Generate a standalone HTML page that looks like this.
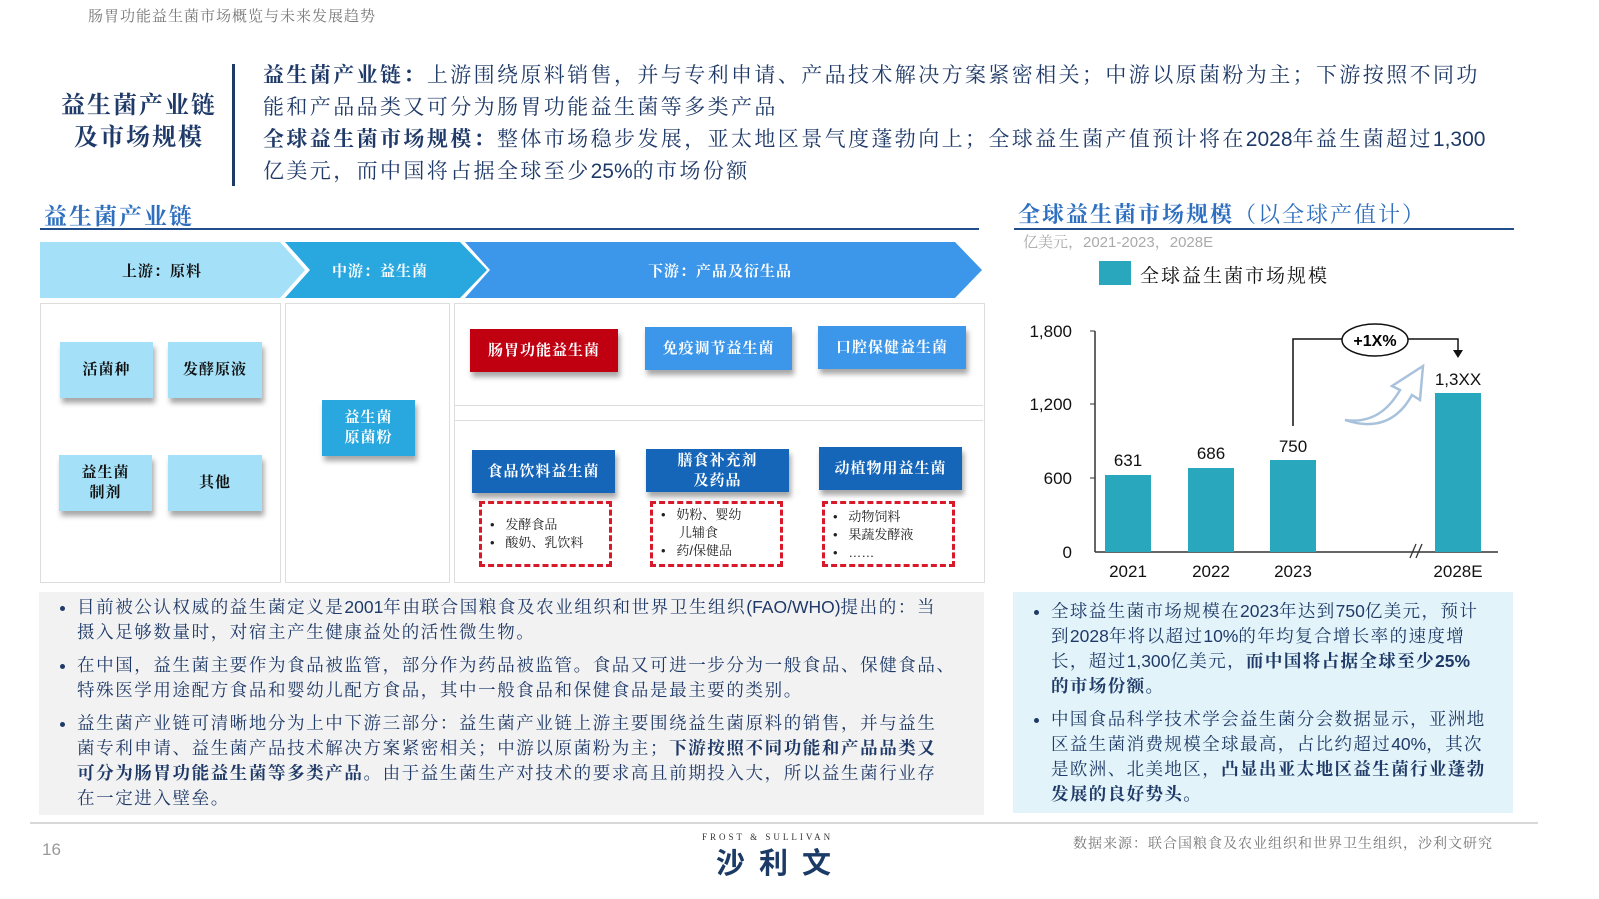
<!DOCTYPE html>
<html><head><meta charset="utf-8"><style>
body{margin:0;width:1599px;height:899px;background:#fff;position:relative;overflow:hidden;font-family:"Liberation Sans","Noto Serif CJK SC",serif;}
.a{position:absolute}
.s{font-family:"Liberation Sans","Noto Serif CJK SC",serif}
.box{position:absolute;box-shadow:2px 5px 5px rgba(0,0,0,.35);display:flex;align-items:center;justify-content:center;text-align:center;font-size:15px;font-weight:bold;line-height:20px;letter-spacing:1px}
.lb{background:#a4e0f7;color:#111}
.dash{position:absolute;border:3px dashed #d9182a;font-size:13px;color:#222;line-height:18px;padding:6px 0 0 8px;box-sizing:border-box}
.txt{color:#1f3a68;font-size:17.5px;line-height:25px;letter-spacing:1.6px;white-space:nowrap}
.l{letter-spacing:0}
ul{margin:0;padding-left:36px}
li{margin-bottom:8px}
</style></head><body>
<div class="a s" style="left:88px;top:5px;font-size:15px;color:#777;letter-spacing:1px">肠胃功能益生菌市场概览与未来发展趋势</div>

<div class="a" style="left:54px;top:90px;width:170px;text-align:center;font-size:24px;font-weight:bold;color:#1f3a68;line-height:32px;letter-spacing:2px">益生菌产业链<br>及市场规模</div>
<div class="a" style="left:232px;top:64px;width:3px;height:122px;background:#1f3a68"></div>
<div class="a" style="left:263px;top:60px;font-size:21px;line-height:32px;color:#1f3a68;letter-spacing:2.4px;white-space:nowrap"><b>益生菌产业链：</b>上游围绕原料销售，并与专利申请、产品技术解决方案紧密相关；中游以原菌粉为主；下游按照不同功<br>能和产品品类又可分为肠胃功能益生菌等多类产品<br><b>全球益生菌市场规模：</b>整体市场稳步发展，亚太地区景气度蓬勃向上；全球益生菌产值预计将在<span class="l">2028</span>年益生菌超过<span class="l">1,300</span><br>亿美元，而中国将占据全球至少<span class="l">25%</span>的市场份额</div>

<div class="a" style="left:44px;top:198px;font-size:23px;font-weight:bold;color:#2e6fbf;letter-spacing:2px">益生菌产业链</div>
<div class="a" style="left:40px;top:228px;width:939px;height:2px;background:#1f4e8a"></div>

<svg class="a" style="left:40px;top:242px" width="945" height="56">
<polygon points="0,0 240,0 265,28 240,56 0,56" fill="#a4e0f7"/>
<polygon points="245,0 420,0 447,28 420,56 245,56 270,28" fill="#29a8e0"/>
<polygon points="425,0 915,0 942,28 915,56 425,56 450,28" fill="#3c97ea"/>
<text x="122" y="34" font-size="15" font-weight="bold" text-anchor="middle" fill="#111" font-family="Noto Serif CJK SC" letter-spacing="1">上游：原料</text>
<text x="340" y="34" font-size="15" font-weight="bold" text-anchor="middle" fill="#fff" font-family="Noto Serif CJK SC" letter-spacing="1">中游：益生菌</text>
<text x="680" y="34" font-size="15" font-weight="bold" text-anchor="middle" fill="#fff" font-family="Noto Serif CJK SC" letter-spacing="1">下游：产品及衍生品</text>
</svg>

<div class="a" style="left:40px;top:303px;width:239px;height:278px;border:1px solid #ddd"></div>
<div class="a" style="left:285px;top:303px;width:163px;height:278px;border:1px solid #ddd"></div>
<div class="a" style="left:454px;top:303px;width:529px;height:278px;border:1px solid #ddd"></div>
<div class="a" style="left:454px;top:405px;width:529px;height:1px;background:#ddd"></div>
<div class="a" style="left:454px;top:420px;width:529px;height:1px;background:#ddd"></div>

<div class="box lb" style="left:60px;top:342px;width:93px;height:56px">活菌种</div>
<div class="box lb" style="left:168px;top:342px;width:94px;height:56px">发酵原液</div>
<div class="box lb" style="left:59px;top:455px;width:93px;height:56px">益生菌<br>制剂</div>
<div class="box lb" style="left:168px;top:455px;width:94px;height:56px">其他</div>
<div class="box" style="left:322px;top:400px;width:93px;height:56px;background:#29a8e0;color:#fff">益生菌<br>原菌粉</div>

<div class="box" style="left:470px;top:329px;width:148px;height:43px;background:#c00010;color:#fff">肠胃功能益生菌</div>
<div class="box" style="left:645px;top:327px;width:147px;height:43px;background:#3c97ea;color:#fff">免疫调节益生菌</div>
<div class="box" style="left:818px;top:326px;width:148px;height:43px;background:#3c97ea;color:#fff">口腔保健益生菌</div>
<div class="box" style="left:472px;top:450px;width:143px;height:43px;background:#1565b8;color:#fff">食品饮料益生菌</div>
<div class="box" style="left:646px;top:449px;width:143px;height:43px;background:#1565b8;color:#fff">膳食补充剂<br>及药品</div>
<div class="box" style="left:819px;top:447px;width:143px;height:43px;background:#1565b8;color:#fff">动植物用益生菌</div>

<div class="dash" style="left:479px;top:501px;width:133px;height:66px;padding-top:12px">•&nbsp;&nbsp;&nbsp;发酵食品<br>•&nbsp;&nbsp;&nbsp;酸奶、乳饮料</div>
<div class="dash" style="left:650px;top:501px;width:133px;height:66px;padding-top:2px">•&nbsp;&nbsp;&nbsp;奶粉、婴幼<br>&nbsp;&nbsp;&nbsp;&nbsp;&nbsp;儿辅食<br>•&nbsp;&nbsp;&nbsp;药/保健品</div>
<div class="dash" style="left:822px;top:501px;width:133px;height:66px;padding-top:4px">•&nbsp;&nbsp;&nbsp;动物饲料<br>•&nbsp;&nbsp;&nbsp;果蔬发酵液<br>•&nbsp;&nbsp;&nbsp;……</div>

<div class="a txt" style="left:39px;top:592px;width:945px;height:223px;background:#f2f2f2;box-sizing:border-box;padding:3px 14px 0 2px">
<ul><li>目前被公认权威的益生菌定义是<span class="l">2001</span>年由联合国粮食及农业组织和世界卫生组织<span class="l">(FAO/WHO)</span>提出的：当<br>摄入足够数量时，对宿主产生健康益处的活性微生物。</li>
<li>在中国，益生菌主要作为食品被监管，部分作为药品被监管。食品又可进一步分为一般食品、保健食品、<br>特殊医学用途配方食品和婴幼儿配方食品，其中一般食品和保健食品是最主要的类别。</li>
<li>益生菌产业链可清晰地分为上中下游三部分：益生菌产业链上游主要围绕益生菌原料的销售，并与益生<br>菌专利申请、益生菌产品技术解决方案紧密相关；中游以原菌粉为主；<b>下游按照不同功能和产品品类又<br>可分为肠胃功能益生菌等多类产品</b>。由于益生菌生产对技术的要求高且前期投入大，所以益生菌行业存<br>在一定进入壁垒。</li></ul></div>

<div class="a" style="left:1018px;top:198px;font-size:22px;color:#2e6fbf;letter-spacing:2px"><b>全球益生菌市场规模</b>（以全球产值计）</div>
<div class="a" style="left:1014px;top:228px;width:500px;height:2px;background:#1f4e8a"></div>
<div class="a" style="left:1023px;top:231px;font-size:15px;color:#aaa">亿美元，2021-2023，2028E</div>
<div class="a" style="left:1099px;top:261px;width:32px;height:24px;background:#29a8bd"></div>
<div class="a" style="left:1140px;top:261px;font-size:19px;color:#111;letter-spacing:2px">全球益生菌市场规模</div>

<svg class="a" style="left:1000px;top:300px" width="599" height="290" font-family="Liberation Sans">
<line x1="95" y1="31" x2="95" y2="252" stroke="#333" stroke-width="1.5"/>
<line x1="95" y1="252" x2="498" y2="252" stroke="#333" stroke-width="1.5"/>
<g stroke="#333"><line x1="90" y1="31" x2="95" y2="31"/><line x1="90" y1="104" x2="95" y2="104"/><line x1="90" y1="178" x2="95" y2="178"/></g>
<g font-size="17" text-anchor="end" fill="#111"><text x="72" y="37">1,800</text><text x="72" y="110">1,200</text><text x="72" y="184">600</text><text x="72" y="258">0</text></g>
<g fill="#29a8bd"><rect x="105" y="175" width="46" height="77"/><rect x="188" y="168" width="46" height="84"/><rect x="270" y="160" width="46" height="92"/><rect x="435" y="93" width="46" height="159"/></g>
<g font-size="17" text-anchor="middle" fill="#111"><text x="128" y="166">631</text><text x="211" y="159">686</text><text x="293" y="152">750</text><text x="458" y="85">1,3XX</text>
<text x="128" y="277">2021</text><text x="211" y="277">2022</text><text x="293" y="277">2023</text><text x="458" y="277">2028E</text></g>
<path d="M293 126V39H345M405 39H458V52" fill="none" stroke="#111" stroke-width="1.5"/>
<polygon points="453,50 463,50 458,58" fill="#111"/>
<ellipse cx="375" cy="40" rx="33" ry="16" fill="#fff" stroke="#111" stroke-width="1.5"/>
<text x="375" y="46" font-size="16" font-weight="bold" text-anchor="middle">+1X%</text>
<path d="M345 120Q380 125 400 90L392 86L423 66L420 100L412 95Q390 135 345 120Z" fill="none" stroke="#a9c2dc" stroke-width="2.5"/>
<g stroke="#333" stroke-width="1.3"><line x1="410" y1="258" x2="416" y2="244"/><line x1="416" y1="258" x2="422" y2="244"/></g>
</svg>

<div class="a txt" style="left:1013px;top:592px;width:500px;height:221px;background:#e2f4f9;box-sizing:border-box;padding:7px 12px 0 2px;letter-spacing:1.4px">
<ul><li>全球益生菌市场规模在<span class="l">2023</span>年达到<span class="l">750</span>亿美元，预计<br>到<span class="l">2028</span>年将以超过<span class="l">10%</span>的年均复合增长率的速度增<br>长，超过<span class="l">1,300</span>亿美元，<b>而中国将占据全球至少<span class="l">25%</span><br>的市场份额。</b></li>
<li>中国食品科学技术学会益生菌分会数据显示，亚洲地<br>区益生菌消费规模全球最高，占比约超过<span class="l">40%</span>，其次<br>是欧洲、北美地区，<b>凸显出亚太地区益生菌行业蓬勃<br>发展的良好势头。</b></li></ul></div>

<div class="a" style="left:30px;top:822px;width:1508px;height:2px;background:#d8d8d8"></div>
<div class="a" style="left:42px;top:840px;font-size:17px;color:#999">16</div>
<div class="a" style="left:702px;top:832px;font-size:9px;letter-spacing:3px;color:#333;font-family:'Liberation Serif',serif">FROST &amp; SULLIVAN</div>
<div class="a" style="left:716px;top:840px;font-size:29px;font-weight:bold;letter-spacing:14px;color:#1b3a66;font-family:'Noto Sans CJK SC',sans-serif">沙利文</div>
<div class="a" style="left:1073px;top:833px;font-size:14px;color:#777;letter-spacing:1px">数据来源：联合国粮食及农业组织和世界卫生组织，沙利文研究</div>
</body></html>
